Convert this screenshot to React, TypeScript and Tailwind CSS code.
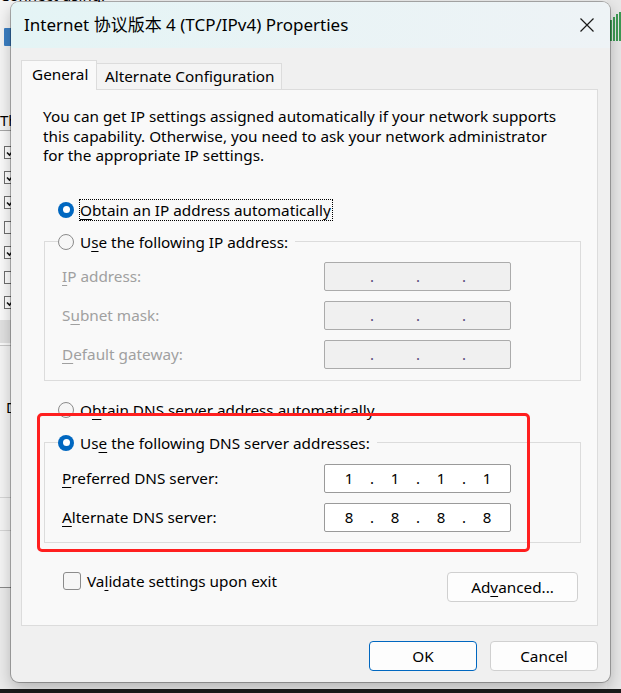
import React from 'react'

const ui = "font-['Noto_Sans','Noto_Sans_CJK_SC',sans-serif]"

function Radio({ checked = false }: { checked?: boolean }) {
  if (checked) {
    return (
      <span className="flex h-[16px] w-[16px] shrink-0 items-center justify-center rounded-full bg-[#0067c0]">
        <span className="h-[7px] w-[7px] rounded-full bg-white" />
      </span>
    )
  }
  return <span className="h-[16px] w-[16px] shrink-0 rounded-full border border-[#8b8b8b] bg-[#f6f6f6]" />
}

function U({ children }: { children: React.ReactNode }) {
  return <span className="underline decoration-1 underline-offset-[3px]">{children}</span>
}

function IpBox({ parts, disabled = false }: { parts: string[]; disabled?: boolean }) {
  return (
    <div
      className={
        'flex h-[29px] w-[187px] items-center rounded-[2px] border pl-[3px] text-[15px] ' +
        (disabled ? 'border-[#ababab] bg-[#f0f0f0]' : 'border-[#9a9a9a] bg-white text-black')
      }
    >
      {parts.map((p, i) => (
        <React.Fragment key={i}>
          <span className="w-[42px] text-center">{p}</span>
          {i < 3 && (
            <span className={'flex w-[4px] justify-center ' + (disabled ? 'text-[#5a4a7a]' : '')}>.</span>
          )}
        </React.Fragment>
      ))}
    </div>
  )
}

function FieldRow({ label, parts, disabled = false }: { label: React.ReactNode; parts: string[]; disabled?: boolean }) {
  return (
    <div className="flex items-center">
      <span className={'ml-[4px] w-[262px] ' + (disabled ? 'text-[#a0a0a0]' : 'text-black')}>{label}</span>
      <IpBox parts={parts} disabled={disabled} />
    </div>
  )
}

function Btn({ children, primary = false, className = '' }: { children: React.ReactNode; primary?: boolean; className?: string }) {
  return (
    <button
      className={
        'flex h-[30px] items-center justify-center rounded-[4px] border bg-[#fdfdfd] text-[15.3px] text-black ' +
        (primary ? 'border-[#0067c0]' : 'border-[#d0d0d0]') +
        ' ' +
        className
      }
    >
      {children}
    </button>
  )
}

export default function App() {
  const empty = ['', '', '', '']
  return (
    <div className={'relative h-[693px] w-[621px] overflow-hidden bg-[#ececec] ' + ui}>
      {/* window behind, top edge */}
      <div className="absolute left-0 top-0 h-[4px] w-[120px] overflow-hidden bg-[#f5f5f5]">
        <div className="-mt-[15px] h-[20px] whitespace-nowrap text-[15px] leading-[20px] text-black">Connect using:</div>
      </div>

      {/* window behind, left */}
      <div className="absolute left-0 top-[4px] h-[584px] w-[11px] overflow-hidden border-b border-[#8a8a8a] bg-[#f5f5f5]">
        <div className="ml-[4px] mt-[24px] h-[18px] w-[8px] rounded-[1px] bg-[#3b7fc4]" />
        <div className="mt-[64px] h-[20px] whitespace-nowrap text-[15px] leading-[20px] text-black">Th</div>
        <div className="h-[215px] border-t border-[#a8a8a8] bg-[#fbfbfb] pt-[15px]">
          {[true, true, true, false, true, false, true].map((c, i) => (
            <div key={i} className="mb-[12px] ml-[4px] flex h-[13px] w-[13px] items-center justify-center border border-[#6e6e6e] bg-white">
              {c && (
                <svg width="9" height="9" viewBox="0 0 9 9">
                  <path d="M1 4.5 L3.5 7 L8 1.5" stroke="#111" strokeWidth="1.6" fill="none" />
                </svg>
              )}
            </div>
          ))}
          <div className="-mt-[1px] h-[23px] bg-[#e2e2e2]" />
        </div>
        <div className="h-px bg-[#c8c8c8]" />
        <div className="ml-[6px] mt-[51px] h-[20px] text-[15px] leading-[20px]">D</div>
        <div className="mt-[80px] h-px bg-[#d6d6d6]" />
        <div className="mt-[32px] h-px bg-[#d6d6d6]" />
      </div>

      {/* window behind, right */}
      <div className="absolute right-0 top-0 h-full w-[14px] bg-[#e8e8e8]">
        <svg width="14" height="40" viewBox="0 0 14 40" className="mt-[6px]">
          <rect x="3" y="14" width="2" height="21" fill="#3d9a54" />
          <rect x="6" y="11" width="2" height="24" fill="#3d9a54" />
          <rect x="9" y="8" width="2" height="27" fill="#3d9a54" />
          <rect x="12" y="6" width="2" height="29" fill="#3d9a54" />
        </svg>
      </div>

      <div className="absolute bottom-0 left-0 h-[4px] w-full bg-[#1b1b1b]" />

      {/* dialog */}
      <div className="absolute left-[11px] top-[2px] flex h-[680px] w-[599px] flex-col overflow-hidden rounded-[8px] bg-[#f0f0f0] shadow-[0_0_0_1px_rgba(0,0,0,0.28),0_6px_16px_rgba(0,0,0,0.25)]">
        {/* title bar */}
        <div className="flex h-[46px] shrink-0 items-center bg-gradient-to-r from-[#e4f4f5] to-[#eef3f6] pl-[13px] pr-[13px]">
          <span className="text-[17px] text-black">Internet 协议版本 4 (TCP/IPv4) Properties</span>
          <svg width="16" height="16" viewBox="0 0 16 16" className="ml-auto mr-[2px]">
            <path d="M1.5 1.5 L14.5 14.5 M14.5 1.5 L1.5 14.5" stroke="#1a1a1a" strokeWidth="1.2" fill="none" />
          </svg>
        </div>

        <div className="flex flex-col pl-[10px] pr-[12px]">
          {/* tabs */}
          <div className="mt-[11px] flex h-[30px] items-end text-[15.3px] text-black">
            <div className="relative z-10 -mb-px flex h-[30px] w-[76px] items-start border border-b-0 border-[#dcdcdc] bg-[#f9f9f9] pl-[10px] pt-[2px]">
              General
            </div>
            <div className="flex h-[26px] items-center border border-b-0 border-l-0 border-[#dcdcdc] bg-[#f4f4f4] pl-[8px] pr-[6px]">
              Alternate Configuration
            </div>
          </div>

          {/* panel */}
          <div className="flex h-[537px] flex-col border border-[#dcdcdc] bg-[#f9f9f9] pl-[21px] pr-[16px] pt-[17px] text-[15.3px] leading-[20px] text-black">
            <p className="pr-[10px] leading-[19.5px]">
              You can get IP settings assigned automatically if your network supports
              <br />
              this capability. Otherwise, you need to ask your network administrator
              <br />
              for the appropriate IP settings.
            </p>

            <div className="ml-[15px] mt-[34px] flex h-[20px] items-center gap-[5px]">
              <Radio checked />
              <span className="border border-dotted border-black pr-[1px]">
                <U>O</U>btain an IP address automatically
              </span>
            </div>

            <fieldset className="ml-px mt-[12px] border border-[#dcdcdc] pb-[11px] pl-[13px]">
              <legend className="flex h-[20px] items-center gap-[6px] pr-[7px]">
                <Radio />
                <span>
                  U<U>s</U>e the following IP address:
                </span>
              </legend>
              <div className="mt-[10px] flex flex-col gap-[10px]">
                <FieldRow disabled parts={empty} label={<><U>I</U>P address:</>} />
                <FieldRow disabled parts={empty} label={<>S<U>u</U>bnet mask:</>} />
                <FieldRow disabled parts={empty} label={<><U>D</U>efault gateway:</>} />
              </div>
            </fieldset>

            <div className="ml-[15px] mt-[19px] flex h-[20px] items-center gap-[6px]">
              <Radio />
              <span>
                O<U>b</U>tain DNS server address automatically
              </span>
            </div>

            <fieldset className="ml-px mt-[13px] border border-[#dcdcdc] pb-[10px] pl-[13px]">
              <legend className="flex h-[20px] items-center gap-[6px] pr-[7px]">
                <Radio checked />
                <span>
                  Us<U>e</U> the following DNS server addresses:
                </span>
              </legend>
              <div className="mt-[11px] flex flex-col gap-[10px]">
                <FieldRow parts={['1', '1', '1', '1']} label={<><U>P</U>referred DNS server:</>} />
                <FieldRow parts={['8', '8', '8', '8']} label={<><U>A</U>lternate DNS server:</>} />
              </div>
            </fieldset>

            <div className="mt-[28px] flex items-start">
              <div className="ml-[20px] flex h-[20px] items-center gap-[6px]">
                <span className="h-[18px] w-[18px] rounded-[3px] border border-[#8b8b8b] bg-[#f6f6f6]" />
                <span>
                  Va<U>l</U>idate settings upon exit
                </span>
              </div>
              <Btn className="ml-auto mr-[3px] mt-px w-[131px]">
                Ad<U>v</U>anced...
              </Btn>
            </div>
          </div>

          {/* dialog buttons */}
          <div className="mt-[15px] flex justify-end gap-[13px]">
            <Btn primary className="h-[29px] w-[108px]">OK</Btn>
            <Btn className="h-[29px] w-[108px]">Cancel</Btn>
          </div>
        </div>
      </div>

      {/* annotation */}
      <div className="absolute left-[37px] top-[413px] h-[139px] w-[493px] rounded-[5px] border-[3px] border-[#ff1f1f]" />
    </div>
  )
}
